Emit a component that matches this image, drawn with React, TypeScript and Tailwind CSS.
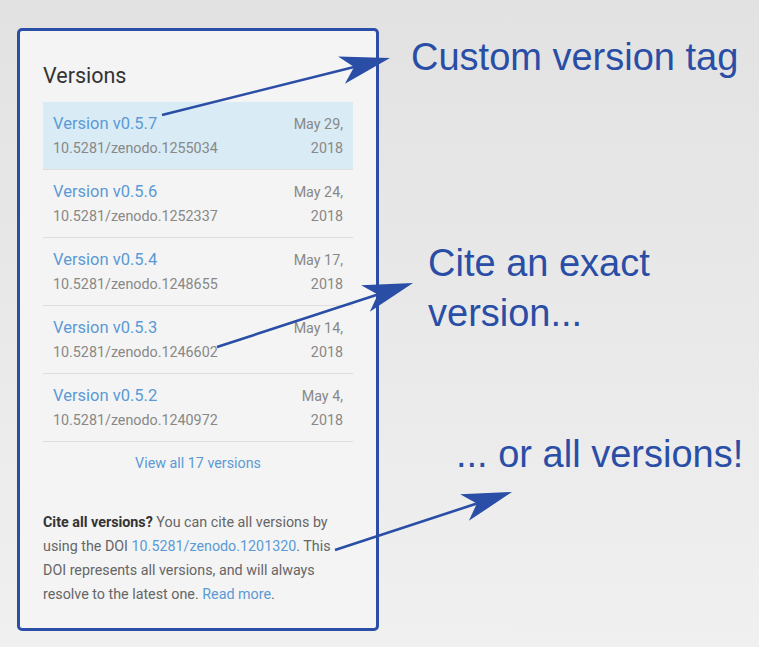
const versions = [
    { tag: "v0.5.7", doi: "10.5281/zenodo.1255034", day: "May 29,", active: true },
    { tag: "v0.5.6", doi: "10.5281/zenodo.1252337", day: "May 24," },
    { tag: "v0.5.4", doi: "10.5281/zenodo.1248655", day: "May 17," },
    { tag: "v0.5.3", doi: "10.5281/zenodo.1246602", day: "May 14," },
    { tag: "v0.5.2", doi: "10.5281/zenodo.1240972", day: "May 4," },
];

// arrow from (x1,y1) to tip (x2,y2) with a stealth head
function Arrow({ x1, y1, x2, y2 }: { x1: number; y1: number; x2: number; y2: number }) {
    const len = Math.hypot(x2 - x1, y2 - y1);
    const ux = (x2 - x1) / len;
    const uy = (y2 - y1) / len;
    const nx = -uy;
    const ny = ux;
    const back = 50;
    const half = 14;
    const notch = 37;
    const a = [x2 - back * ux + half * nx, y2 - back * uy + half * ny];
    const b = [x2 - back * ux - half * nx, y2 - back * uy - half * ny];
    const n = [x2 - notch * ux, y2 - notch * uy];
    return (
        <g>
            <line x1={x1} y1={y1} x2={n[0]} y2={n[1]} stroke="#2a4ea6" strokeWidth={2.6} />
            <polygon
                points={`${x2},${y2} ${a[0]},${a[1]} ${n[0]},${n[1]} ${b[0]},${b[1]}`}
                fill="#2a4ea6"
            />
        </g>
    );
}

function VersionRow({ tag, doi, day, active }: { tag: string; doi: string; day: string; active?: boolean }) {
    return (
        <div
            className={
                "flex justify-between pl-[10px] pr-[10px] pt-[10px] pb-[9px] border-b border-[#dedede] " +
                (active ? "bg-[#d9ebf5]" : "")
            }
        >
            <div className="flex flex-col">
                <span className="text-[16.5px] leading-[24px] text-[#5b9ad5]">Version {tag}</span>
                <span className="text-[14.3px] leading-[24px] text-[#888]">{doi}</span>
            </div>
            <div className="flex flex-col items-end text-[14.3px] leading-[24px] text-[#888]">
                <span>{day}</span>
                <span>2018</span>
            </div>
        </div>
    );
}

export default function App() {
    return (
        <div className="relative w-[759px] h-[647px] overflow-hidden flex bg-linear-to-b from-[#e2e2e2] to-[#f0f0f0]">
            <div className="ml-[17px] mt-[28px] w-[362px] h-[603px] shrink-0 rounded-[5px] border-[3px] border-[#2b4fa6] bg-[#f4f4f4] pl-[23px] pr-[23px] pt-[31px] font-['Roboto',sans-serif]">
                <h2 className="text-[21.5px] leading-[28px] text-[#333] mb-[12px]">Versions</h2>

                <div className="flex flex-col">
                    {versions.map((v) => (
                        <VersionRow key={v.tag} {...v} />
                    ))}
                </div>

                <p className="mt-[9px] text-center text-[14.3px] leading-[24px] text-[#5b9ad5]">
                    View all 17 versions
                </p>

                <p className="mt-[35px] text-[14.3px] leading-[24px] text-[#666]">
                    <b className="font-bold text-[#333]">Cite all versions?</b> You can cite all versions by
                    using the DOI <span className="text-[#5b9ad5]">10.5281/zenodo.1201320</span>. This DOI
                    represents all versions, and will always resolve to the latest one.{" "}
                    <span className="text-[#5b9ad5]">Read more</span>.
                </p>
            </div>

            <div className="flex flex-col text-[38px] leading-[38px] text-[#2a4ea6] font-['Liberation_Sans',Arial,sans-serif]">
                <span className="ml-[32px] mt-[38px] whitespace-nowrap">Custom version tag</span>
                <span className="ml-[49px] mt-[162px] leading-[50px] whitespace-nowrap">
                    Cite an exact
                    <br />
                    version...
                </span>
                <span className="ml-[77px] mt-[97px] whitespace-nowrap">... or all versions!</span>
            </div>

            <svg className="absolute inset-0 pointer-events-none" width={759} height={647}>
                <Arrow x1={162} y1={115} x2={390} y2={58} />
                <Arrow x1={217} y1={347} x2={413} y2={283} />
                <Arrow x1={335} y1={550} x2={512} y2={492} />
            </svg>
        </div>
    );
}
